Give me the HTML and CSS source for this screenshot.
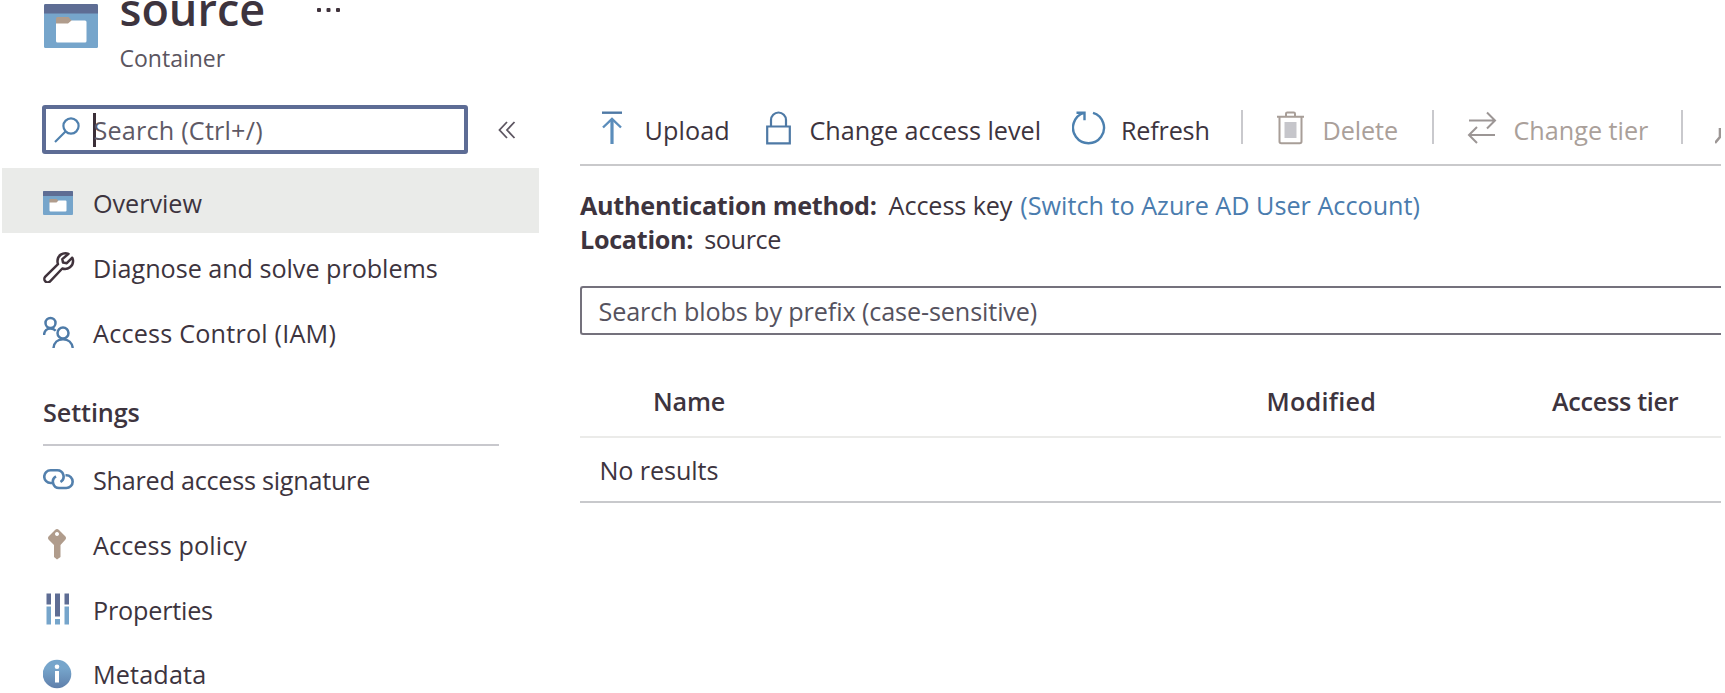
FILE: index.html
```html
<!DOCTYPE html>
<html lang="en">
<head>
<meta charset="utf-8">
<title>source - Container</title>
<link rel="stylesheet" href="styles.css">
</head>
<body>
<div class="page">
  <aside class="sidebar">
    <header class="header">
      <svg class="header-icon" width="54" height="44" viewBox="0 0 54 44">
        <rect width="54" height="44" rx="1.5" fill="#76a5cb"/>
        <path d="M0 9.500V1.500Q0 0 1.500 0H52.500Q54 0 54 1.500V9.500Z" fill="#5e6d94"/>
        <path d="M12 14.500q0-1.500 1.500-1.500h11l3 3.500v5H12z" fill="#b09c8c"/>
        <path d="M12 19.500h12l3.500-3H41q1.500 0 1.500 1.500v19q0 1.500-1.500 1.500H13.500q-1.500 0-1.500-1.500z" fill="#fff"/>
      </svg>
      <div class="heading">
        <div class="title-row">
          <h1 class="title">source</h1>
          <svg class="more" width="24" height="6" viewBox="0 0 24 6" fill="#40333c"><rect x="0" y="1" width="4" height="4" rx="1"/><rect x="9.500" y="1" width="4" height="4" rx="1"/><rect x="19" y="1" width="4" height="4" rx="1"/></svg>
        </div>
        <div class="subtitle">Container</div>
      </div>
    </header>
    <div class="search-row">
      <div class="search">
        <svg width="26" height="26" viewBox="0 0 26 26" fill="none" stroke="#4f80ae" stroke-width="2.200"><circle cx="17" cy="9" r="7.600"/><path d="M11.500 14.500L1 25"/></svg>
        <span class="caret"></span>
        <span class="search-text">Search (Ctrl+/)</span>
      </div>
      <svg class="collapse" width="18" height="18" viewBox="0 0 18 18" fill="none" stroke="#5d5661" stroke-width="1.800"><path d="M9 1L1.500 9L9 17M16.500 1L9 9l7.500 8"/></svg>
    </div>
    <nav class="nav primary">
      <a class="item active">
        <svg class="icon" viewBox="0 0 32 32">
          <rect y="5" width="30" height="24" rx="1" fill="#76a5cb"/>
          <path d="M0 10V6q0-1 1-1h28q1 0 1 1v4z" fill="#5e6d94"/>
          <path d="M6.500 13h7l2 2v3h-9z" fill="#b09c8c"/>
          <path d="M6.500 16.500h7l2-2H22.500q1 0 1 1v9q0 1-1 1h-15q-1 0-1-1z" fill="#fff"/>
        </svg>
        <span class="label">Overview</span>
      </a>
      <a class="item">
        <svg class="icon" viewBox="0 0 32 32" fill="none" stroke="#40333c" stroke-width="2.500" stroke-linejoin="round">
          <path d="M25.500 2.800C20 .8 14.200 4.500 14.500 10.500c0 1 .2 1.900.5 2.700L2.300 25.600a3.300 3.300 0 0 0 4.800 4.700L19.300 17.500c5.600 1.800 11.300-2.300 10.700-8.300-.1-1-.3-1.700-.7-2.500L23.800 12.200 20 11.600l-.7-3.500z"/>
        </svg>
        <span class="label">Diagnose and solve problems</span>
      </a>
      <a class="item">
        <svg class="icon" viewBox="0 0 32 32" fill="none" stroke="#4e7ba8" stroke-width="2.500">
          <circle cx="7.500" cy="7" r="5"/><path d="M1 19c.3-4 3-6.500 6.500-6.500 2.200 0 4 .8 5.200 2.200"/>
          <circle cx="20" cy="17" r="5.500"/><path d="M10.500 32c.5-5.200 4.200-8.700 9.500-8.700s9 3.500 9.800 8.700"/>
        </svg>
        <span class="label iam">Access Control (IAM)</span>
      </a>
    </nav>
    <h2 class="section">Settings</h2>
    <nav class="nav">
      <a class="item">
        <svg class="icon" viewBox="0 0 32 32" fill="none" stroke="#5380ad" stroke-width="2.600">
          <path d="M9.500 20H7.600A6.300 6.300 0 0 1 7.600 7.300h6.600A6.300 6.300 0 0 1 17.500 19"/>
          <path d="M22.500 12.300h.8a6.300 6.300 0 0 1 0 12.700h-6.600A6.300 6.300 0 0 1 13 13.300"/>
        </svg>
        <span class="label sas">Shared access signature</span>
      </a>
      <a class="item">
        <svg class="icon" viewBox="0 0 32 32" fill="#b09c8c">
          <path fill-rule="evenodd" d="M14 1q1 0 2 1l6.500 6.500q1.200 1.500 0 3L17.500 17v12L14 31.500 11 29V17L5.500 11.500q-1.200-1.500 0-3L12 2q1-1 2-1zM14 4a2 2 0 1 0 .01 0z"/>
        </svg>
        <span class="label policy">Access policy</span>
      </a>
      <a class="item">
        <svg class="icon" viewBox="0 0 32 32">
          <path d="M3.500 .5h4.500v11H3.500zM12 .5h5v23h-5zM21.500 .5h4.500v11h-4.500z" fill="#5e6d94"/>
          <path d="M3.500 13.500h4.500v18H3.500zM12 26h5v5.500h-5zM21.500 13.500h4.500v18h-4.500z" fill="#76a5cb"/>
        </svg>
        <span class="label props">Properties</span>
      </a>
      <a class="item">
        <svg class="icon" viewBox="0 0 32 32">
          <defs><linearGradient id="info" x1="0" y1="0" x2="0" y2="1"><stop offset=".3" stop-color="#76a5cb"/><stop offset="1" stop-color="#5f7fab"/></linearGradient></defs>
          <circle cx="14" cy="17" r="14.300" fill="url(#info)"/>
          <circle cx="14" cy="9.800" r="2.300" fill="#fff"/><path d="M12 14h4v11.500h-4z" fill="#fff"/>
        </svg>
        <span class="label meta">Metadata</span>
      </a>
    </nav>
  </aside>
  <main class="main">
    <div class="toolbar">
      <div class="tool upload">
        <svg width="20" height="36" viewBox="0 0 20 36" fill="none" stroke="#5b8dbb" stroke-width="2.400"><path d="M0 1.700h20" stroke="#4e79a5"/><path d="M10 33V8.500" stroke-width="3.200"/><path d="M1 16.500L10 7.800l9 8.700"/></svg>
        <span>Upload</span>
      </div>
      <div class="tool access">
        <svg width="25" height="36" viewBox="0 0 25 36" fill="none" stroke="#4e79a5" stroke-width="2.200"><path d="M1.200 15.500h22.600v16.800H1.200zM5 15.500V9a7.500 7.500 0 0 1 15 0v6.500"/></svg>
        <span>Change access level</span>
      </div>
      <div class="tool refresh">
        <svg width="34" height="36" viewBox="0 0 34 36" fill="none" stroke="#4c80af" stroke-width="2.400"><path d="M21 1.900A15.500 15.500 0 1 1 12 1.900M4.500 1.700h8v7.500"/></svg>
        <span>Refresh</span>
      </div>
      <div class="divider"></div>
      <div class="tool disabled delete">
        <svg width="27" height="36" viewBox="0 0 27 36" fill="none" stroke="#a89e98" stroke-width="2"><path d="M0 5.800h27M9 5.500V2.800q0-1.300 1.300-1.300h6.400q1.300 0 1.300 1.300v2.700"/><path d="M2.500 6v24.500q0 1.800 1.800 1.800h18.400q1.800 0 1.800-1.800V6"/><path d="M7.500 11h12v16h-12z" fill="#c6c6cb" stroke="none"/></svg>
        <span>Delete</span>
      </div>
      <div class="divider"></div>
      <div class="tool disabled tier">
        <svg width="30" height="36" viewBox="0 0 30 36" fill="none" stroke="#9c9695" stroke-width="2"><path d="M2 9.500h26M20 1.500l8 8-8 8M28 24H2M10 16l-8 8 8 8"/></svg>
        <span>Change tier</span>
      </div>
      <div class="divider"></div>
      <svg width="6" height="36" viewBox="0 0 6 36" fill="none" stroke="#9c9695" stroke-width="2.600"><path d="M5 17v9L0 32"/></svg>
    </div>
    <div class="facts">
      <div class="fact"><b class="auth">Authentication method:</b><span class="key">Access key</span><a class="link">(Switch to Azure AD User Account)</a></div>
      <div class="fact"><b class="where">Location:</b><span class="loc">source</span></div>
    </div>
    <div class="prefix">Search blobs by prefix (case-sensitive)</div>
    <div class="table">
      <div class="thead"><span>Name</span><span class="modified">Modified</span><span class="tiercol">Access tier</span></div>
      <div class="empty">No results</div>
    </div>
  </main>
</div>
</body>
</html>
```
FILE: styles.css
```css
* { box-sizing: border-box; }
body {
  margin: 0;
  background: #fff;
  color: #3d343e;
  font-family: "Open Sans", "Noto Sans", sans-serif;
  font-size: 25.2px;
  line-height: 36px;
  white-space: nowrap;
  overflow: hidden;
}
svg { display: block; flex: none; }
.page { display: flex; height: 693px; overflow: hidden; }
.sidebar { width: 539px; flex: none; }

.header { display: flex; height: 105px; padding-left: 44px; }
.header-icon { margin-top: 4px; }
.heading { padding-left: 21.500px; }
.title-row { display: flex; align-items: flex-start; }
.title { margin: 0; width: 197.500px; font-size: 45px; font-weight: 600; line-height: 18px; }
.more { margin-top: 7px; }
.subtitle { margin-top: 25px; font-size: 23px; line-height: 30px; color: #5b5560; }

.search-row { display: flex; align-items: center; padding-left: 42px; }
.search {
  display: flex;
  align-items: center;
  width: 426px;
  height: 49px;
  padding-left: 8px;
  border: 4px solid #5d6c95;
  border-radius: 3px;
}
.caret { width: 2.500px; height: 34px; margin-left: 13px; background: #3b2f38; }
.search-text { margin-left: -2px; letter-spacing: .2px; color: #5e5965; }
.collapse { margin-left: 30px; }

.nav { margin-left: 2px; }
.primary { margin-top: 14px; }
.item { display: flex; align-items: center; height: 64.700px; padding: 2px 0 0 41px; }
.primary .item { height: 65px; }
.active { background: #eaebe9; }
.icon { width: 32px; height: 32px; }
.label { margin-left: 18px; padding-top: 2px; letter-spacing: -.04px; }
.iam { letter-spacing: .2px; }
.policy { letter-spacing: .1px; }
.props { letter-spacing: -.2px; }
.sas { letter-spacing: -.25px; }
.meta { letter-spacing: .15px; }
.section {
  width: 456px;
  height: 52px;
  margin: 31px 0 0 43px;
  border-bottom: 2px solid #c8c8cd;
  font-size: 25.200px;
  font-weight: 600;
  line-height: 36px;
  letter-spacing: -.1px;
}

.main { width: 1141px; flex: none; margin-left: 41px; }
.toolbar {
  display: grid;
  grid-template-columns: 164px 306px 169px 36px 155px 35px 214px 34px 6px;
  align-items: center;
  height: 72px;
  margin-top: 94px;
  padding-left: 22px;
  border-bottom: 2px solid #c9c9cb;
}
.tool { display: flex; align-items: center; }
.tool span { padding-top: 1px; }
.upload { gap: 22.500px; letter-spacing: .1px; }
.access { gap: 18.500px; letter-spacing: 0; }
.refresh { gap: 15px; letter-spacing: -.2px; }
.delete { gap: 18.500px; letter-spacing: -.1px; }
.tier { gap: 16.500px; }
.disabled { color: #aaa09a; }
.divider { width: 2px; height: 34px; margin-top: -4px; background: #c9c9cd; }

.facts { margin-top: 22px; line-height: 34px; }
.fact { display: flex; }
.auth { letter-spacing: -.28px; }
.key { margin-left: 12px; letter-spacing: -.1px; }
.link { margin-left: 8px; color: #4a7cae; }
.where { letter-spacing: -.3px; }
.loc { margin-left: 11px; letter-spacing: -.4px; }

.prefix {
  height: 49px;
  margin-top: 30px;
  padding-left: 16.500px;
  border: 2px solid #74717c;
  border-right: 0;
  border-radius: 3px 0 0 3px;
  line-height: 46px;
  color: #55525e;
  letter-spacing: -.12px;
}
.table { margin-top: 31px; }
.thead {
  display: grid;
  grid-template-columns: 613.500px 285.500px 1fr;
  align-items: center;
  height: 72px;
  padding-left: 73px;
  border-bottom: 2px solid #ebebe9;
  font-weight: 600;
}
.thead span:first-child { letter-spacing: -.2px; }
.modified { letter-spacing: .25px; }
.tiercol { letter-spacing: -.3px; }
.empty { height: 65px; padding: 14px 0 0 19.500px; border-bottom: 2px solid #c8c9cc; letter-spacing: -.1px; }
```
